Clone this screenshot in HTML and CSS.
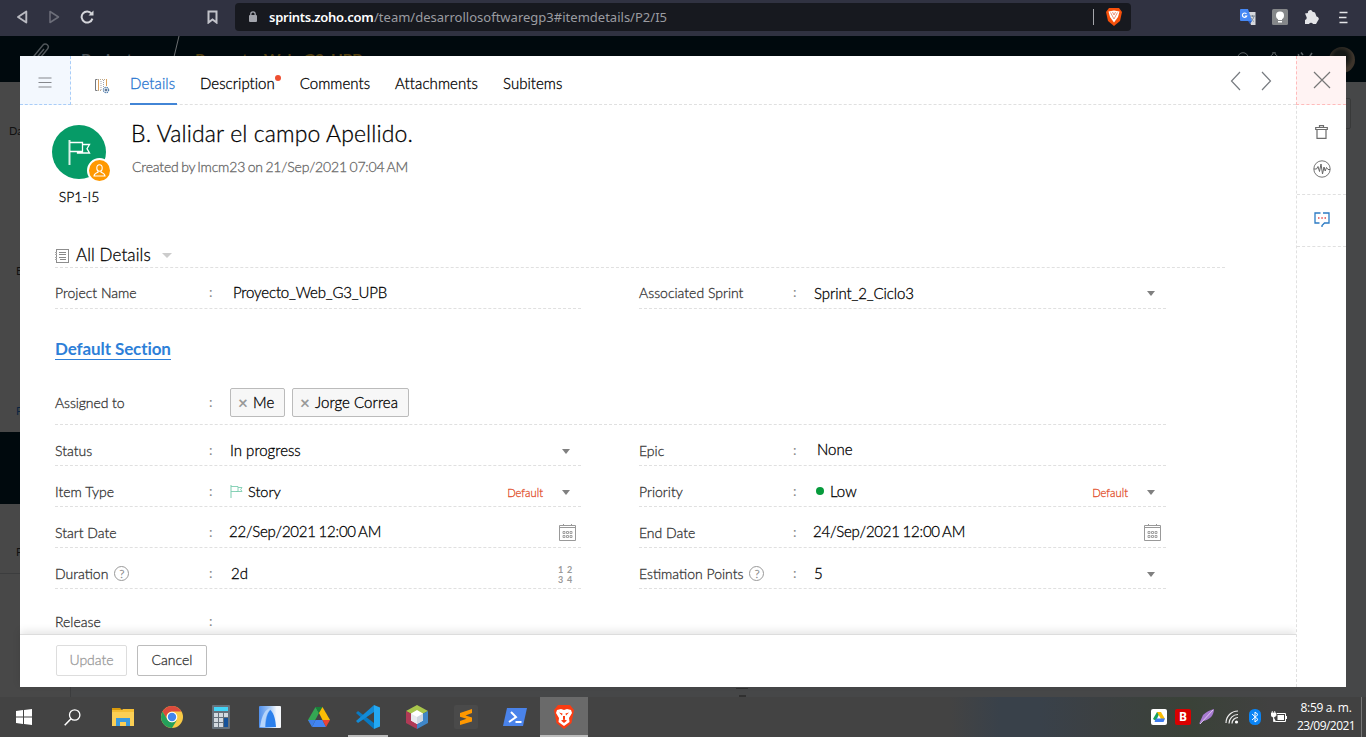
FILE: index.html
```html
<!DOCTYPE html>
<html lang="en">
<head>
<meta charset="utf-8">
<title>Item details</title>
<link rel="stylesheet" href="styles.css">
</head>
<body>
<div class="screen">
  <header class="browser">
    <div class="nav">
      <svg width="12" height="14" viewBox="0 0 12 14"><path d="M10.300 1.500v11L2 7z" fill="none" stroke="#b9bac1" stroke-width="1.900" stroke-linejoin="round"/></svg>
      <svg width="12" height="14" viewBox="0 0 12 14"><path d="M2 1.500v11L10.500 7z" fill="none" stroke="#6c6e79" stroke-width="1.500" stroke-linejoin="round"/></svg>
      <svg width="14" height="14" viewBox="0 0 14 14"><path d="M11.500 3.600A5.500 5.500 0 1 0 12.400 8.600" fill="none" stroke="#d4d5da" stroke-width="2"/><path d="M13.500 .5v5H8.500z" fill="#d4d5da"/></svg>
    </div>
    <svg class="bookmark" width="11" height="14" viewBox="0 0 11 14"><path d="M1.500 1.500h8v11l-4-3-4 3z" fill="none" stroke="#c2c3ca" stroke-width="2"/></svg>
    <div class="urlbar">
      <svg width="8" height="12" viewBox="0 0 8 12"><rect y="4" width="8" height="7" rx="1" fill="#a3a5ad"/><path d="M1.800 5V3a2.200 2.200 0 0 1 4.400 0v2" fill="none" stroke="#a3a5ad" stroke-width="1.300"/></svg>
      <span class="host">sprints.zoho.com</span><span class="path">/team/desarrollosoftwaregp3#itemdetails/P2/I5</span>
      <i class="urlsep"></i>
      <svg width="16" height="18" viewBox="0 0 16 18"><path d="M3 0h10l3 4-2 9-6 5-6-5L0 4z" fill="#f6500b"/><path d="M2.500 3.500L8 2.500l5.500 1L12 9l-4 5.500L4 9z" fill="#fff"/><path d="M4.500 4.500L8 11l3.500-6.500M6.500 4L8 7l1.500-3" fill="none" stroke="#e8866b" stroke-width=".9"/></svg>
    </div>
    <div class="extensions">
      <svg width="16" height="16" viewBox="0 0 16 16"><path d="M6 3h9.500v13H11z" fill="#d6d8dc"/><path d="M10 7h5M12.500 6v2M14 7c-.5 3-2 4-3 5m0-3c1 2 2 3 3 3.500" fill="none" stroke="#7f8c98"/><path d="M1 0h7l4 12H1a1 1 0 0 1-1-1V1a1 1 0 0 1 1-1z" fill="#4688f4"/><path d="M8 12h4l-2 3z" fill="#2c5fc4"/><path d="M6.500 5A2.200 2.200 0 1 0 6.700 7H4.800" fill="none" stroke="#fff" stroke-width="1.200"/></svg>
      <svg width="16" height="16" viewBox="0 0 16 16"><rect width="16" height="16" rx="1.500" fill="#858789"/><circle cx="8" cy="6.500" r="4" fill="#fff"/><path d="M6 9h4v2H6zM6 12h4v1.500H6z" fill="#fff"/></svg>
      <svg width="15" height="15" viewBox="0 0 15 15"><path d="M1 3.500L4 3a2.300 2.300 0 0 1 4.500-1.200l2.500.7 1.500 4a2.300 2.300 0 0 1 1.500 4L12 14H9a2.300 2.300 0 0 0-4 0H1v-4a2.300 2.300 0 0 0 1.500-3z" fill="#e4e5e8"/></svg>
      <svg width="9" height="13" viewBox="0 0 9 13"><path d="M.5 1.500h8M0 6.500h7.500M.5 11.500h8" stroke="#e4e5e8" stroke-width="1.700"/></svg>
    </div>
  </header>

  <main class="page">
    <div class="apphead">
      <svg class="pencil" width="24" height="24" viewBox="0 0 24 24"><path d="M1 20L14 4a3 3 0 0 1 4.500 4L7 22M5 20L15 8" fill="none" stroke="#50565a" stroke-width="1.400"/></svg>
      <span class="crumb">Projects</span>
      <svg class="slash" width="14" height="46" viewBox="0 0 14 46"><path d="M11 0L0 46" stroke="#6a6e70"/></svg>
      <span class="crumb project">Proyecto_Web_G3_UPB</span>
      <div class="appicons">
        <svg width="14" height="14" viewBox="0 0 14 14"><circle cx="6" cy="6" r="5.300" fill="none" stroke="#5b6265"/></svg>
        <svg width="14" height="14" viewBox="0 0 14 14"><path d="M1 10c3-1 1-6 5-8V0h2v2c4 2 2 7 5 8" fill="none" stroke="#5b6265"/></svg>
        <svg width="17" height="14" viewBox="0 0 17 14"><path d="M1.500 2a3.500 3.500 0 0 0 6 3M4 .5L6 3M9 10l6-9" fill="none" stroke="#5b6265" stroke-width="1.500"/></svg>
        <i class="avatar"></i>
      </div>
    </div>
    <div class="appbody">
      <aside class="side">
        <span class="s1">Da</span><span class="s2">B</span><span class="s3">P</span><i class="band"></i><span class="s4">P</span>
      </aside>
      <i class="ghostfield"></i>
      <i class="ghosthandle"></i>
    </div>

    <section class="modal">
      <div class="main">
        <div class="tabs">
          <button class="menu"><svg width="14" height="11" viewBox="0 0 14 11"><path d="M.5 1h13M.5 5.500h13M.5 10h13" stroke="#85888d"/></svg></button>
          <svg class="layout" width="16" height="16" viewBox="0 0 16 16"><path d="M3.500 1.500h-2v11h2" fill="none" stroke="#77797d"/><path d="M4 1.500h8M4 12.500h4" stroke="#bda98c" stroke-dasharray="1 1"/><path d="M4.500 2v10M12.500 1v7" stroke="#dca15c"/><path d="M7 3v9M9.500 2v7" stroke="#9da0b0" stroke-dasharray="1 1"/><circle cx="12" cy="12" r="2.500" fill="#fff" stroke="#4b78a8" stroke-width="1.500" stroke-dasharray="1.200 .8"/><circle cx="12" cy="12" r="1" fill="#344e70"/></svg>
          <nav>
            <a class="tab active">Details</a><a class="tab">Description<i class="dot"></i></a><a class="tab">Comments</a><a class="tab attach">Attachments</a><a class="tab">Subitems</a>
          </nav>
          <div class="pager">
            <svg width="11" height="20" viewBox="0 0 11 20"><path d="M10 1L1.500 10 10 19" fill="none" stroke="#777b80" stroke-width="1.200"/></svg>
            <svg width="11" height="20" viewBox="0 0 11 20"><path d="M1 1l8.500 9L1 19" fill="none" stroke="#777b80" stroke-width="1.200"/></svg>
          </div>
        </div>

        <div class="content">
          <div class="title">
            <div class="ident">
              <div class="disc">
                <svg width="24" height="28" viewBox="0 0 24 28"><path d="M2.500 1v25" stroke="#d8f0e7" stroke-width="2"/><path d="M3 3.500h12.500v9H3M15.500 5.500H22.500l-2.500 4.200 2.500 4.300H10.500v-1" fill="none" stroke="#fff" stroke-width="1.300"/></svg>
                <span class="badge"><svg width="13" height="13" viewBox="0 0 13 13"><ellipse cx="6.500" cy="4" rx="2.700" ry="3.300" fill="none" stroke="#fff" stroke-width="1.100"/><path d="M5 7v1.200C2.500 9 1.300 9.600 1 12h11c-.3-2.400-1.500-3-4-3.800V7" fill="none" stroke="#fff" stroke-width="1.100"/></svg></span>
              </div>
              <span class="code">SP1-I5</span>
            </div>
            <div class="heading">
              <h1>B. Validar el campo Apellido.</h1>
              <p>Created by lmcm23 on 21/Sep/2021 07:04 AM</p>
            </div>
          </div>

          <div class="view">
            <svg width="15" height="15" viewBox="0 0 15 15"><rect x="1.500" y=".5" width="12" height="13" fill="none" stroke="#8d8d8d"/><path d="M0 3.500h2M0 5.500h2M0 8.500h2M0 10.500h2" stroke="#aaa"/><path d="M4 3.500h7M4 5.500h7M4 8.500h7M5 10.500h6" stroke="#888"/></svg>
            <span>All Details</span><i class="caret light"></i>
          </div>

          <div class="grid">
            <div class="row top"><label>Project Name</label><b>:</b><span class="val proj">Proyecto_Web_G3_UPB</span></div>
            <div class="row top"><label>Associated Sprint</label><b>:</b><span class="val sprint">Sprint_2_Ciclo3</span><i class="caret"></i></div>
          </div>

          <h2><span>Default Section</span></h2>

          <div class="row wide"><label>Assigned to</label><b>:</b>
            <div class="chips"><span class="chip"><i>×</i>Me</span><span class="chip jorge"><i>×</i>Jorge Correa</span></div>
          </div>

          <div class="grid">
            <div class="row"><label>Status</label><b>:</b><span class="val">In progress</span><i class="caret"></i></div>
            <div class="row"><label>Epic</label><b>:</b><span class="val none">None</span></div>
            <div class="row"><label>Item Type</label><b>:</b>
              <svg class="flag" width="13" height="13" viewBox="0 0 13 13"><path d="M1 0v13" stroke="#7dcdb0"/><path d="M1 1.500h7v5H1M8 2.500h4l-1.300 2 1.300 2H6" fill="none" stroke="#7dcdb0" stroke-width=".9"/></svg>
              <span class="val story">Story</span><span class="def">Default</span><i class="caret"></i></div>
            <div class="row"><label>Priority</label><b>:</b><i class="level"></i><span class="val low">Low</span><span class="def">Default</span><i class="caret"></i></div>
            <div class="row"><label>Start Date</label><b>:</b><span class="val date">22/Sep/2021 12:00 AM</span>
              <svg class="cal" width="17" height="17" viewBox="0 0 17 17"><path d="M.5 1.500h16v15H.5zM.5 3.500h16M4.500 0v2M12.500 0v2" fill="none" stroke="#999"/><path d="M4 7.500h2v2H4zM7.500 7.500h2v2h-2zM11 7.500h2v2h-2zM4 11.500h2v2H4zM7.500 11.500h2v2h-2zM11 11.500h2v2h-2z" fill="none" stroke="#999" stroke-width=".9"/></svg></div>
            <div class="row"><label>End Date</label><b>:</b><span class="val date">24/Sep/2021 12:00 AM</span>
              <svg class="cal" width="17" height="17" viewBox="0 0 17 17"><path d="M.5 1.500h16v15H.5zM.5 3.500h16M4.500 0v2M12.500 0v2" fill="none" stroke="#999"/><path d="M4 7.500h2v2H4zM7.500 7.500h2v2h-2zM11 7.500h2v2h-2zM4 11.500h2v2H4zM7.500 11.500h2v2h-2zM11 11.500h2v2h-2z" fill="none" stroke="#999" stroke-width=".9"/></svg></div>
            <div class="row"><label>Duration <em>?</em></label><b>:</b><span class="val two">2d</span><span class="digits"><i>1</i><i>2</i><i>3</i><i>4</i></span></div>
            <div class="row"><label>Estimation Points <em>?</em></label><b>:</b><span class="val">5</span><i class="caret"></i></div>
            <div class="row last"><label>Release</label><b>:</b></div>
          </div>
        </div>

        <footer class="actions"><button class="btn off">Update</button><button class="btn">Cancel</button></footer>
      </div>

      <aside class="rail">
        <div class="close"><svg width="18" height="18" viewBox="0 0 18 18"><path d="M1 1l16 16M17 1L1 17" stroke="#777" stroke-width="1.200"/></svg></div>
        <div class="tools">
          <svg width="13" height="14" viewBox="0 0 13 14"><path d="M4.500 2.500V.7h4v1.800M.7 2.500h11.600v2H.7zM2 4.500h9v8.800H2z" fill="none" stroke="#6d6d6d" stroke-width="1.200"/></svg>
          <svg width="18" height="18" viewBox="0 0 18 18"><circle cx="9" cy="9" r="8.200" fill="none" stroke="#777"/><path d="M1 9h2.500L5 6.500l1.500 5L8 4l1.500 10L11 7l1.200 4 1.300-3.500L15 9.500h2" fill="none" stroke="#666" stroke-width="1"/></svg>
        </div>
        <div class="feedback"><svg width="16" height="16" viewBox="0 0 16 16"><path d="M6.500 1H1v10h4.500M9 1h6v10h-4.500L8 13.500V15" fill="none" stroke="#2c7bc4" stroke-width="1.300"/><path d="M4 6h1.500M7.300 6h1.500M10.500 6H12" stroke="#e44c4c" stroke-width="1.500"/></svg></div>
      </aside>
    </section>
  </main>

  <footer class="taskbar">
    <div class="apps">
      <span class="app"><svg width="16" height="16" viewBox="0 0 16 16"><path d="M0 2l7-1v6.500H0zM8 .9L16 0v7.500H8zM0 8.500h7V15l-7-1zM8 8.500h8V16l-8-.9z" fill="#fff"/></svg></span>
      <span class="app"><svg width="17" height="17" viewBox="0 0 17 17"><circle cx="10.700" cy="6" r="5.200" fill="none" stroke="#fff" stroke-width="1.300"/><path d="M7 9.700L.7 16.300" stroke="#fff" stroke-width="1.500"/></svg></span>
      <span class="app folder"><svg width="22" height="18" viewBox="0 0 22 18"><path d="M0 0h8l2 2H0z" fill="#d99a0b"/><path d="M0 2h22v16H0z" fill="#fbcf55"/><path d="M0 2h10l1-1h11v3H0z" fill="#f4be35"/><path d="M4 10h14v8h-4v-4H8v4H4z" fill="#3b9ade"/></svg></span>
      <span class="app"><svg width="22" height="22" viewBox="0 0 22 22"><circle cx="11" cy="11" r="11" fill="#f9ca45"/><path d="M1.500 5.500A11 11 0 0 1 20.500 5.500H11a5.500 5.500 0 0 0-5 8z" fill="#dc4a3d"/><path d="M1.500 5.500A11 11 0 0 0 11 22l5-8a6 6 0 0 1-10-1z" fill="#24a05b"/><circle cx="11" cy="11" r="5.300" fill="#fff"/><circle cx="11" cy="11" r="4.200" fill="#4285ec"/></svg></span>
      <span class="app"><svg width="18" height="24" viewBox="0 0 18 24"><rect width="18" height="24" rx="1" fill="#66717b"/><path d="M2 2h14v4H2z" fill="#43d4f7"/><path d="M2 8h4v4H2zM7 8h4v4H7zM12 8h4v4h-4zM2 13h4v4H2zM7 13h4v4H7zM2 18h4v4H2zM7 18h4v4H7z" fill="#d3dae0"/><path d="M12 13h4v9h-4z" fill="#15529a"/></svg></span>
      <span class="app"><svg width="22" height="22" viewBox="0 0 22 22"><defs><linearGradient id="aw"><stop offset="0" stop-color="#4f8fec"/><stop offset=".5" stop-color="#a5c9f6"/><stop offset=".8" stop-color="#f4f7fb"/></linearGradient></defs><rect width="22" height="22" rx="1" fill="url(#aw)"/><path d="M1 21C3 9 6 3 12 2 7 8 6 14 6 21z" fill="#b5d4fa"/><path d="M6.500 21C7 10 9 6 11.500 4c4 4 5 11 5.500 17z" fill="#2b80ec"/></svg></span>
      <span class="app"><svg width="22" height="20" viewBox="0 0 22 20"><path d="M7.500 0L11 6 4 19l-4-6z" fill="#34a853"/><path d="M7.500 0h7L11 6z" fill="#188038"/><path d="M14.500 0L22 13h-7.500L11 6z" fill="#fbbc04"/><path d="M7.500 13h7L18 20H4z" fill="#4285f4"/><path d="M0 13h7.500L4 20z" fill="#3f7ee8"/><path d="M14.500 13H22l-4 7z" fill="#ea4335"/></svg></span>
      <span class="app open"><svg width="24" height="24" viewBox="0 0 24 24"><path d="M0 8l2-2 16 12v6z" fill="#0879c2"/><path d="M18 0v7L2 18l-2-2z" fill="#128bd8"/><path d="M18 0l6 2.500v19L18 24z" fill="#24a8f2"/></svg></span>
      <span class="app"><svg width="22" height="24" viewBox="0 0 22 24"><path d="M11 0l11 6-11 6L0 6z" fill="#a9c64c"/><path d="M0 6l11 6v12L0 18z" fill="#b03a56"/><path d="M22 6l-11 6v12l11-6z" fill="#3f86c8"/><path d="M11 5l6 3.500v7L11 19l-6-3.500v-7z" fill="#fff"/><path d="M11 12l6-3.500v7L11 19z" fill="#cfd7df"/><path d="M11 12L5 8.500v7L11 19z" fill="#e8ebee"/></svg></span>
      <span class="app sublime"><i><svg width="12" height="16" viewBox="0 0 12 16"><path d="M12 0v4L5.500 6.500 12 8.500V12.500L0 16v-4L6.500 9.800 0 7.800V4z" fill="#ff9800"/></svg></i></span>
      <span class="app"><svg width="24" height="18" viewBox="0 0 24 18"><path d="M4 0h20l-4 18H0z" fill="#4a83ea"/><path d="M8 4l5 5-7 5M12.500 14h6" fill="none" stroke="#fff" stroke-width="2"/></svg></span>
      <span class="app current"><svg width="20" height="24" viewBox="0 0 20 24"><path d="M4 0h12l4 5-2.500 13L10 24 2.500 18 0 5z" fill="#fb3c12"/><path d="M3 5l4-1 3 1 3-1 4 1 1 3-3 5 .5 4L10 21l-5.500-4 .5-4-3-5z" fill="#fff"/><path d="M5 7.500l3.500 1L8 10.500zM15 7.500l-3.500 1 .5 2zM9 11h2v3.500H9zM7 15.500l3-1 3 1-3 2.500z" fill="#fb3c12"/></svg></span>
    </div>
    <div class="tray">
      <svg width="16" height="16" viewBox="0 0 16 16"><rect width="16" height="16" rx="2" fill="#fff"/><path d="M6 3h3L5 12l-3-2z" fill="#16a05b"/><path d="M6 3h4l4 7h-4z" fill="#fbbc04"/><path d="M5 9.500h9L12.500 13h-9z" fill="#3f7df0"/></svg>
      <span class="bit">B</span>
      <svg width="16" height="16" viewBox="0 0 16 16"><path d="M0 15L4 6c3-3 7-5 11-6 0 6-4 11-11 12z" fill="#a77ad0"/><path d="M1 15L14 1" stroke="#e0c8f3"/></svg>
      <svg class="wifi" width="14" height="14" viewBox="0 0 14 14"><path d="M1 13A12 12 0 0 1 13 1M4 13.500a9 9 0 0 1 9-9M7 13.500a6 6 0 0 1 6-6" fill="none" stroke="#eee" stroke-width="1.200"/><circle cx="11.500" cy="12" r="1.600" fill="#fff"/></svg>
      <svg class="bt" width="12" height="16" viewBox="0 0 12 16"><rect width="12" height="16" rx="5.500" fill="#0a84f5"/><path d="M3 5l6 5.500L6 13V3l3 2.500L3 11" fill="none" stroke="#fff"/></svg>
      <svg class="bat" width="16" height="13" viewBox="0 0 16 13"><path d="M0 2h5v2.500L3.500 6h-2L0 4.500zM1.300 0v2M3.700 0v2M2.500 6v4.500H5" fill="#fff" stroke="#fff" stroke-width=".8"/><path d="M6 2.500h8.500v8H5" fill="none" stroke="#fff"/><path d="M6.500 4H13v5H6.500z" fill="#fff"/><path d="M15.500 5v3" stroke="#fff"/></svg>
      <div class="clock"><span>8:59 a. m.</span><span>23/09/2021</span></div>
      <i class="edge"></i>
    </div>
  </footer>
</div>
</body>
</html>
```
FILE: styles.css
```css
* { box-sizing: border-box; }
body { margin: 0; font-family: Lato, sans-serif; font-weight: 300; color: #000; }
i, em { font-style: normal; }
svg { display: block; flex: none; }
.screen { width: 1366px; height: 737px; overflow: hidden; display: flex; flex-direction: column; }

/* browser chrome */
.browser { height: 36px; background: #303241; display: flex; align-items: flex-start; }
.nav { display: flex; align-items: center; gap: 20px; padding: 10px 0 0 16px; width: 207px; }
.bookmark { margin-top: 10px; width: 11px; }
.urlbar { width: 896px; height: 28px; margin: 3px 0 0 17px; border-radius: 4px; background: #17191f; display: flex; align-items: center; padding: 0 9px 0 14px; font: 13px "Noto Sans", sans-serif; color: #9b9ca1; }
.host { margin-left: 12px; color: #fff; font-weight: 600; letter-spacing: -.27px; width: 105px; }
.path { letter-spacing: .01px; }
.urlsep { width: 1px; height: 16px; background: #a5a6ab; margin: 0 12px 0 auto; }
.extensions { display: flex; align-items: center; margin: 9px 0 0 109px; gap: 16px; }
.extensions svg:last-child { margin-left: 4px; }

/* dimmed application behind the dialog */
.page { height: 661px; position: relative; background: #464748; display: flex; flex-direction: column; }
.apphead { height: 46px; background: #00090d; display: flex; overflow: hidden; }
.pencil { margin: 5px 0 0 29px; }
.crumb { margin: 13px 0 0 28px; font-size: 16px; font-weight: 700; color: #4b5256; width: 92px; letter-spacing: .1px; }
.slash { margin-left: -5px; }
.project { margin-left: 13px; width: 200px; color: #53400f; letter-spacing: -.3px; }
.appicons { margin-left: auto; display: flex; gap: 16px; padding: 16px 11px 0 0; }
.avatar { width: 26px; height: 26px; border-radius: 50%; background: radial-gradient(circle at 45% 40%, #151816 30%, #3d342b 60%); margin: -5px 0 0 -1px; }
.appbody { flex: 1; display: flex; position: relative; }
.side { width: 71px; border-right: 1px solid #3c3d3e; background: #484848; display: flex; flex-direction: column; font-size: 11px; line-height: 14px; font-weight: 400; color: #111; }
.s1 { margin: 42px 0 0 9px; }
.s2 { margin: 126px 0 0 16px; }
.s3 { margin: 126px 0 0 16px; color: #0b2440; }
.band { height: 72px; margin-top: 14px; background: #00090d; }
.s4 { margin: 41px 0 0 16px; padding-bottom: 14px; }
.side::after { content: ""; border-top: 1px solid #3c3d3e; }
.ghostfield { position: absolute; right: 15px; top: 16px; width: 40px; height: 31px; border: 1px solid #383939; border-radius: 2px; }
.ghosthandle { position: absolute; left: 736px; bottom: 0; width: 12px; height: 9px; border-top: 1px solid #303030; }
.ghosthandle::after { content: ""; display: block; width: 7px; height: 2px; margin: 6px 0 0 3px; background: #303030; }

/* dialog */
.modal { position: absolute; left: 20px; top: 20px; width: 1326px; height: 631px; background: #fff; display: flex; -webkit-text-stroke-width: .28px; }
.main { width: 1276px; display: flex; flex-direction: column; }
.tabs { height: 49px; border-bottom: 1px dashed #e0e0e0; display: flex; flex: none; }
.menu { width: 51px; height: 49px; border: 0; border-right: 1px dashed #a9cdf8; border-bottom: 1px dashed #a9cdf8; background: #f3f8fe; padding: 5px 0 0 18px; }
.layout { margin: 22px 0 0 23px; }
.tabs nav { display: flex; margin-left: 20px; gap: 25px; font-size: 15px; line-height: 18px; height: 49px; }
.tab { padding-top: 18px; position: relative; letter-spacing: .03px; }
.attach { letter-spacing: .1px; }
.active { color: #2674d0; border-bottom: 2px solid #4285d6; width: 47px; margin-right: -2px; letter-spacing: .1px; }
.dot { position: absolute; right: -6px; top: 19px; width: 6px; height: 6px; border-radius: 50%; background: #ee4f31; }
.pager { margin: 15px 24px 0 auto; display: flex; gap: 20px; }

.content { flex: 1; min-height: 0; overflow: hidden; padding-left: 35px; }
.title { height: 136px; display: flex; }
.ident { width: 54px; margin: 20px 0 0 -3px; display: flex; flex-direction: column; align-items: center; }
.disc { width: 54px; height: 54px; border-radius: 50%; background: #069b67; padding: 14px 0 0 15px; position: relative; }
.badge { position: absolute; left: 35px; top: 33px; width: 25px; height: 25px; border-radius: 50%; border: 2px solid #fff; background: #ff9800; display: grid; place-items: center; }
.code { font-size: 14px; line-height: 17px; margin-top: 9px; }
.heading { margin: 14px 0 0 25px; }
h1 { margin: 0; font-size: 23px; line-height: 28px; font-weight: 300; letter-spacing: .12px; }
p { margin: 12px 0 0 1px; font-size: 14px; line-height: 16px; letter-spacing: -.16px; word-spacing: -1.1px; color: #666; }
.view { width: 1170px; height: 27px; border-bottom: 1px dashed #e0e0e0; display: flex; font-size: 17px; line-height: 20px; letter-spacing: .1px; }
.view svg { margin-top: 8px; }
.view span { margin: 4px 12px 0 6px; }

.grid { display: grid; grid-template-columns: 526px 527px; column-gap: 58px; }
.row { height: 41px; border-bottom: 1px dashed #e0e0e0; display: flex; align-items: center; padding-top: 11px; font-size: 15px; line-height: 18px; }
.row label { width: 154px; font-size: 14px; color: #333; display: flex; align-items: center; flex: none; }
.row b { width: 21px; font-weight: 400; font-size: 14px; color: #888; flex: none; margin-top: -2px; -webkit-text-stroke-width: 0; }
.top { padding-top: 9px; }
.val { margin-top: -1px; }
.row em { width: 15px; height: 15px; border: 1px solid #999; border-radius: 50%; font-size: 12px; line-height: 13px; text-align: center; color: #888; margin-left: 6px; }
.proj { letter-spacing: -.15px; margin-left: 3px; }
.sprint { letter-spacing: -.08px; margin-top: 1px; }
.none { margin: -3px 0 0 3px; }
.story { margin: 0 0 0 5px; font-size: 14.5px; }
.low { margin-left: 6px; }
.date { letter-spacing: -.22px; word-spacing: -1.1px; margin: -4px 0 0 -1px; }
.two { margin-left: 1px; }
.level { width: 8px; height: 8px; border-radius: 50%; background: #069b3c; margin: -2px 0 0 2px; }
.caret { border: 4px solid transparent; border-top: 5px solid #808080; border-bottom: 0; margin: 2px 11px 0 auto; }
.caret.light { border-width: 5px 5px 0; border-top-color: #ccc; margin: 12px 0 0 -1px; }
.def { margin: 2px 19px 0 auto; font-size: 11.2px; color: #e2512d; }
.def + .caret { margin-left: 0; }
.cal { margin: 0 5px 0 auto; }
.digits { margin: 2px 7px 0 auto; display: grid; grid-template-columns: 9px 7px; font-size: 9px; line-height: 10px; font-weight: 700; color: #999; -webkit-text-stroke-width: 0; }
h2 { margin: 0; height: 73px; padding-top: 30px; font-size: 17px; line-height: 20px; font-weight: 700; letter-spacing: -.1px; color: #2d7fd8; -webkit-text-stroke-width: 0; }
h2 span { display: inline-block; border-bottom: 1px solid #2d7fd8; }
.wide { width: 1111px; height: 43px; padding: 0; }
.wide label { letter-spacing: -.1px; }
.chips { display: flex; gap: 7px; margin-top: -1px; }
.chip { height: 29px; width: 55px; border: 1px solid #bbb; border-radius: 2px; background: #f7f7f7; padding: 4px 0 0 7px; display: flex; }
.chip i { width: 15px; font-size: 17px; font-weight: 700; color: #999; margin-top: 1px; -webkit-text-stroke-width: 0; }
.jorge { width: 117px; letter-spacing: .05px; }
.last { border: 0; height: 55px; }

.actions { height: 53px; flex: none; border-top: 1px solid #ddd; box-shadow: 0 -3px 8px rgba(0, 0, 0, .1); background: #fff; padding: 10px 0 0 36px; display: flex; gap: 10px; }
.btn { width: 70px; height: 31px; border: 1px solid #bcbcbc; border-radius: 2px; background: #fff; font: 300 14px Lato, sans-serif; color: #333; padding: 0 0 2px; -webkit-text-stroke-width: .28px; }
.btn.off { width: 71px; color: #999; border-color: #ddd; }

.rail { width: 50px; border-left: 1px dashed #e0e0e0; background: #fff; position: relative; }
.close { height: 49px; margin-left: -1px; background: #fff3f3; border-left: 1px dashed #fbb; border-bottom: 1px dashed #fbb; padding: 15px 0 0 15.5px; }
.tools { height: 90px; border-bottom: 1px dashed #e0e0e0; display: flex; flex-direction: column; align-items: center; gap: 21px; padding-top: 20px; }
.feedback { height: 52px; border-bottom: 1px dashed #e0e0e0; padding: 17px 0 0 16.5px; }

/* taskbar */
.taskbar { height: 40px; background: linear-gradient(90deg, #434343 0 950px, #39414a 1000px 1040px, #3c4042 1100px, #3a4238 1190px, #414141 1270px); display: flex; justify-content: space-between; }
.apps { display: flex; }
.app { width: 48px; height: 40px; margin-right: 1px; display: grid; place-items: center; }
.app:nth-child(-n+2) { margin-right: 0; }
.folder { margin-left: 3px; padding-right: 1px; }
.open { border-bottom: 2px solid #bbb; width: 40px; margin: 0 5px 0 4px; padding-top: 2px; }
.current { background: #6a6a6a; border-bottom: 2px solid #bbb; padding-top: 2px; }
.sublime i { width: 24px; height: 24px; background: #4a4a4a; border-radius: 2px; display: grid; place-items: center; }
.tray { display: flex; align-items: center; gap: 8px; }
.bit { width: 16px; height: 16px; border-radius: 2px; background: #d90000; color: #fff; font: 700 12px/16px "Noto Sans", sans-serif; text-align: center; }
.wifi, .bt, .bat { margin-left: 2px; }
.clock { width: 64px; margin-left: -1px; display: flex; flex-direction: column; align-items: center; font: 12px/18px "Open Sans", sans-serif; letter-spacing: -.55px; color: #fff; }
.clock span:first-child { letter-spacing: -.3px; }
.edge { width: 1px; height: 40px; background: #777; margin: 0 4px 0 -5px; }
```
